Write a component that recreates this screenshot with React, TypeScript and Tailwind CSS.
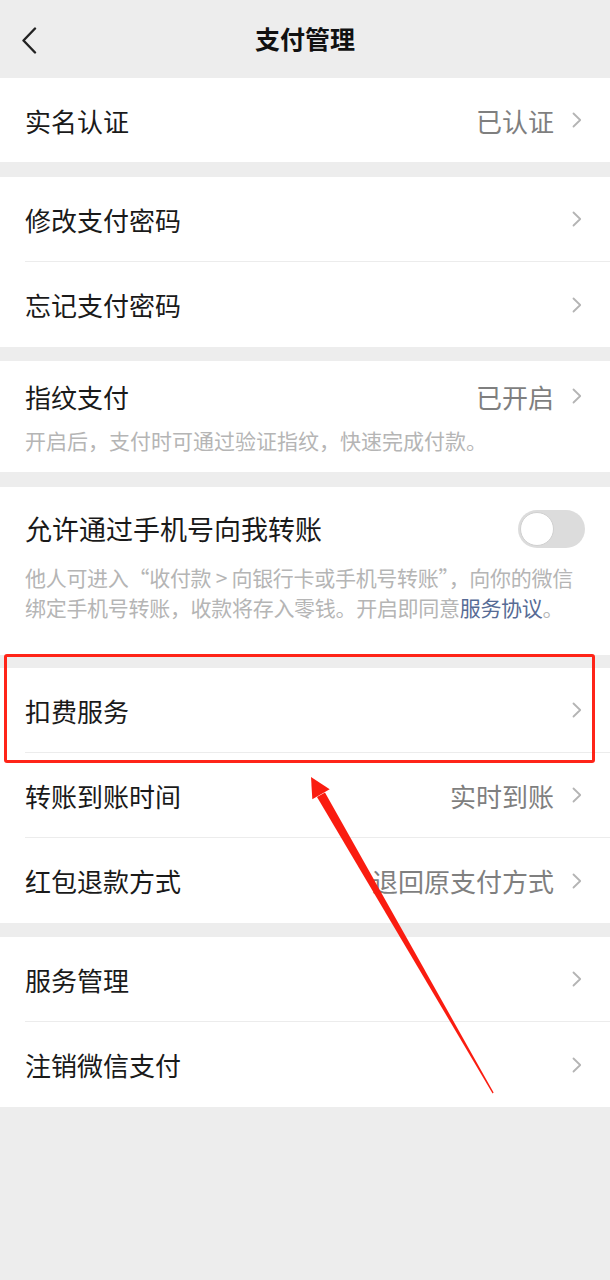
import React from 'react';

const font = { fontFamily: '"Noto Sans CJK SC", "Noto Sans", sans-serif' };

function Chevron() {
  return (
    <svg width="10" height="16" viewBox="0 0 10 16" className="shrink-0">
      <path d="M1.5 1.5 L8.2 8 L1.5 14.5" fill="none" stroke="#b4b4b4" strokeWidth="1.8" strokeLinecap="round" strokeLinejoin="round" />
    </svg>
  );
}

function Row({ label, value, divider = false }: { label: string; value?: string; divider?: boolean }) {
  return (
    <div className="pl-[25px]">
      <div className={`flex items-center h-[85px] pr-[28px] ${divider ? 'border-b border-[#ececec]' : ''}`}>
        <span className="flex-1 text-[26px] text-[#1a1a1a]">{label}</span>
        {value && <span className="text-[26px] text-[#7f7f7f] mr-[18px]">{value}</span>}
        <Chevron />
      </div>
    </div>
  );
}

function Gap({ h }: { h: string }) {
  return <div className={h} />;
}

export default function App() {
  return (
    <div className="relative w-[610px] min-h-[1280px] bg-[#ededed]" style={font}>
      <header className="relative flex items-center justify-center h-[78px]">
        <svg width="16" height="28" viewBox="0 0 16 28" className="absolute left-[21px] top-[27px]">
          <path d="M14 1.5 L2.5 13.5 L14 25.5" fill="none" stroke="#222" strokeWidth="2.4" strokeLinecap="round" strokeLinejoin="round" />
        </svg>
        <h1 className="text-[25px] font-semibold text-[#111]">支付管理</h1>
      </header>

      <section className="bg-white">
        <div className="flex items-center h-[84px] pl-[25px] pr-[28px]">
          <span className="flex-1 text-[26px] text-[#1a1a1a]">实名认证</span>
          <span className="text-[26px] text-[#7f7f7f] mr-[18px]">已认证</span>
          <Chevron />
        </div>
      </section>
      <Gap h="h-[15px]" />

      <section className="bg-white">
        <Row label="修改支付密码" divider />
        <Row label="忘记支付密码" />
      </section>
      <Gap h="h-[14px]" />

      <section className="bg-white pl-[25px] pr-[28px] pt-[17px] pb-[17px]">
        <div className="flex items-center h-[36px]">
          <span className="flex-1 text-[26px] text-[#1a1a1a]">指纹支付</span>
          <span className="text-[26px] text-[#7f7f7f] mr-[18px]">已开启</span>
          <Chevron />
        </div>
        <p className="mt-[11px] text-[21px] leading-[30px] text-[#b5b5b5]">开启后，支付时可通过验证指纹，快速完成付款。</p>
      </section>
      <Gap h="h-[15px]" />

      <section className="bg-white pl-[25px] pr-[25px] pt-[24px] pb-[33px]">
        <div className="flex items-center h-[36px]">
          <span className="flex-1 text-[27px] text-[#1a1a1a]">允许通过手机号向我转账</span>
          <div className="w-[67px] h-[38px] rounded-full bg-[#dcdcdc] p-[2px] flex items-center">
            <div className="w-[34px] h-[34px] rounded-full bg-white border border-[#d0d0d0]" />
          </div>
        </div>
        <p className="mt-[15px] text-[21px] leading-[30px] text-[#b5b5b5] tracking-[-0.3px]">
          他人可进入“收付款 &gt; 向银行卡或手机号转账”，向你的微信绑定手机号转账，收款将存入零钱。开启即同意<span className="text-[#576b95]">服务协议</span>。
        </p>
      </section>
      <Gap h="h-[13px]" />

      <section className="bg-white">
        <Row label="扣费服务" divider />
        <Row label="转账到账时间" value="实时到账" divider />
        <Row label="红包退款方式" value="退回原支付方式" />
      </section>
      <Gap h="h-[14px]" />

      <section className="bg-white">
        <Row label="服务管理" divider />
        <Row label="注销微信支付" />
      </section>

      {/* annotation overlay */}
      <div className="absolute left-[4px] top-[654px] w-[591px] h-[109px] border-[3px] border-[#ff2418] rounded-[3px] pointer-events-none" />
      <svg className="absolute left-0 top-0 pointer-events-none" width="610" height="1280" viewBox="0 0 610 1280">
        <polygon points="311,777 312.3,799.3 329.7,789.3" fill="#fa1c10" />
        <polygon points="317,797 325,792.5 493.6,1092.6 492.6,1093.4" fill="#fa1c10" />
      </svg>
    </div>
  );
}
